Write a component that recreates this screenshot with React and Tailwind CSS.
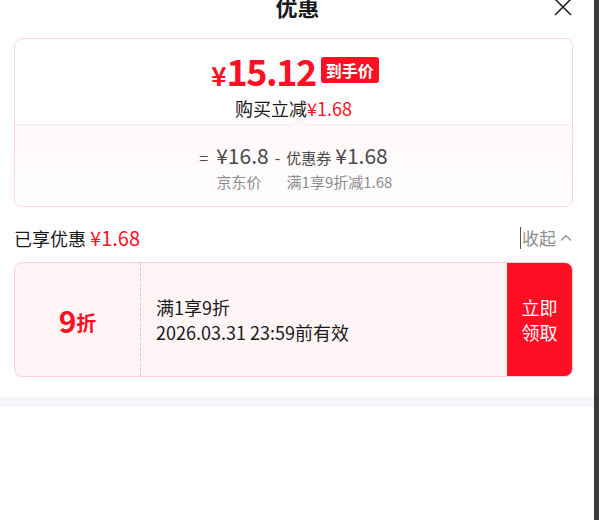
import React from "react";

const font = { fontFamily: '"Noto Sans CJK SC", "Noto Sans", sans-serif' };

export default function App() {
  return (
    <div className="flex w-[599px] h-[520px] bg-white overflow-hidden" style={font}>
      <div className="flex-1 flex flex-col">
        {/* Header */}
        <div className="relative h-[38px] flex justify-center">
          <div className="-mt-[10px] ml-[1px] text-[22px] font-bold text-[#1a1a1a] leading-[32px]">优惠</div>
          <svg className="absolute right-[22px] top-[-1px]" width="18" height="17" viewBox="0 0 18 17">
            <path d="M1 0 L17 16 M17 0 L1 16" stroke="#222" strokeWidth="1.6" fill="none" />
          </svg>
        </div>

        {/* Price card */}
        <div className="ml-[14px] mr-[21px] border border-[#ffd6e2] rounded-[8px] overflow-hidden">
          <div className="flex flex-col items-center pt-[13px] pb-[5px]">
            <div className="flex items-center gap-[5px] pl-[3px]">
              <span className="text-[#ff0f23] font-bold leading-none">
                <span className="text-[26px]">¥</span>
                <span className="text-[36px] tracking-[-1.5px]">15.12</span>
              </span>
              <span className="bg-[#ff0f23] text-white text-[16px] font-bold px-[5px] rounded-[3px] leading-[26px]">到手价</span>
            </div>
            <div className="mt-[9px] text-[18px] text-[#1a1a1a] leading-[22px]">
              购买立减<span className="text-[#ff0f23]">¥1.68</span>
            </div>
          </div>
          <div className="relative border-t border-[#ffe6ec] bg-gradient-to-b from-[#fff7f8] to-white flex flex-col items-center pt-[17px] pb-[14px]">
            <div className="absolute top-[-6px] left-[279px] w-[10px] h-[10px] rotate-45 bg-[#fff7f8] border-l border-t border-[#ffe6ec]" />
            <div className="flex items-baseline text-[#4a4a4a] leading-[26px]">
              <span className="text-[16px] mr-[8px]">=</span>
              <span className="text-[21px]">¥16.8</span>
              <span className="text-[16px] mx-[6px]">-</span>
              <span className="text-[15px] mr-[4px]">优惠券</span>
              <span className="text-[21px]">¥1.68</span>
            </div>
            <div className="mt-[1px] flex text-[15px] text-[#8c8c8c] leading-[20px] pl-[22px]">
              <span>京东价</span>
              <span className="ml-[25px]">满1享9折减1.68</span>
            </div>
          </div>
        </div>

        {/* Discount summary */}
        <div className="ml-[14px] mr-[21px] mt-[19px] flex items-center justify-between leading-[24px]">
          <div className="text-[18px] text-[#1a1a1a]">
            已享优惠 <span className="text-[20px] text-[#ff0f23]">¥1.68</span>
          </div>
          <div className="flex items-center text-[17px] text-[#8c8c8c]">
            <span className="w-px h-[22px] bg-[#555] mr-[1px]" />
            <span>收起</span>
            <svg className="ml-[3px]" width="14" height="14" viewBox="0 0 14 14">
              <path d="M2 9.5 L7 4.5 L12 9.5" stroke="#999" strokeWidth="1.5" fill="none" />
            </svg>
          </div>
        </div>

        {/* Coupon */}
        <div className="ml-[14px] mr-[21px] mt-[12px] h-[115px] flex border border-[#ffcdd6] rounded-[8px] overflow-hidden bg-[#fff5f6]">
          <div className="w-[126px] flex items-center justify-center border-r border-dashed border-[#ffc0cc] text-[#ff0f23] font-bold">
            <span className="text-[30px] leading-none">9</span>
            <span className="text-[20px] mt-[6px]">折</span>
          </div>
          <div className="flex-1 flex flex-col justify-center pl-[15px] text-[18px] text-[#1a1a1a] leading-[25px]">
            <div>满1享9折</div>
            <div>2026.03.31 23:59前有效</div>
          </div>
          <div className="w-[65px] bg-[#ff0f23] flex items-center justify-center text-white text-[18px] leading-[25px] text-center">
            立即
            <br />
            领取
          </div>
        </div>

        <div className="mt-[20px] h-[10px] bg-[#f5f6fa]" />
      </div>
      <div className="w-[5px] bg-[#3a3a3a]" />
    </div>
  );
}
